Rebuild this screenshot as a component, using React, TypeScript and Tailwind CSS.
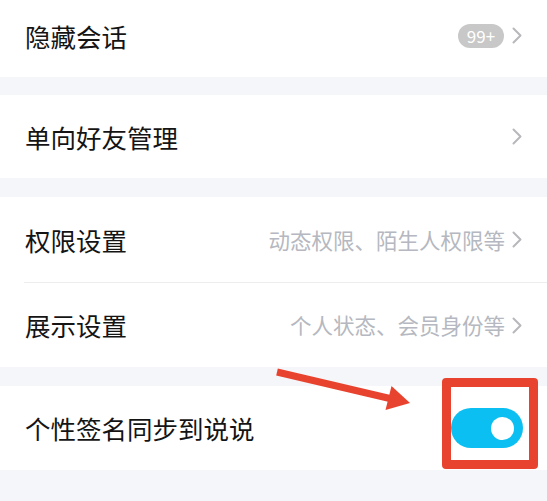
import React from "react";

const FONT = { fontFamily: '"Noto Sans CJK SC", "Noto Sans", sans-serif' };

const Chevron = () => (
  <svg width="10" height="17" viewBox="0 0 10 17" className="shrink-0">
    <polyline points="1.5,1.5 8.5,8.5 1.5,15.5" fill="none" stroke="#b8b8bc" strokeWidth="2" strokeLinecap="round" strokeLinejoin="round" />
  </svg>
);

const Gap = ({ h }: { h: string }) => <div className={`bg-[#f5f6f9] ${h}`} />;

const Row = ({
  label,
  right,
  h,
}: {
  label: string;
  right?: React.ReactNode;
  h: string;
}) => (
  <div className={`flex items-center justify-between bg-white pl-[25px] pr-[25px] ${h}`}>
    <span className="text-[25.5px] leading-none text-[#141414]">{label}</span>
    {right}
  </div>
);

const Hint = ({ text }: { text: string }) => (
  <div className="flex items-center gap-[7px]">
    <span className="text-[21.5px] leading-none text-[#b5b8c0]">{text}</span>
    <Chevron />
  </div>
);

export default function App() {
  return (
    <div className="relative h-[501px] w-[547px] overflow-hidden bg-[#f5f6f9]" style={FONT}>
      <Row
        h="h-[77px] pb-[6px]"
        label="隐藏会话"
        right={
          <div className="flex items-center gap-[8px]">
            <span className="flex h-[24px] w-[46px] items-center justify-center rounded-full bg-[#c8c8c8] text-[17px] leading-none text-white">
              99+
            </span>
            <Chevron />
          </div>
        }
      />
      <Gap h="h-[18px]" />
      <Row h="h-[83px]" label="单向好友管理" right={<Chevron />} />
      <Gap h="h-[19px]" />
      <Row h="h-[85px]" label="权限设置" right={<Hint text="动态权限、陌生人权限等" />} />
      <div className="bg-white pl-[24px]">
        <div className="h-px bg-[#ededf0]" />
      </div>
      <Row h="h-[84px]" label="展示设置" right={<Hint text="个人状态、会员身份等" />} />
      <Gap h="h-[19px]" />
      <div className="flex h-[84px] items-center justify-between bg-white pl-[25px] pr-[24px]">
        <span className="text-[25.5px] leading-none text-[#141414]">个性签名同步到说说</span>
        <div className="flex h-[40px] w-[72px] items-center justify-end rounded-full bg-[#0cbff2] pr-[9px]">
          <div className="h-[23px] w-[23px] rounded-full bg-white" />
        </div>
      </div>

      {/* annotation overlay */}
      <div className="pointer-events-none absolute left-[442px] top-[378px] h-[91px] w-[96px] rounded-[4px] border-[9px] border-[#e8432f]" />
      <svg className="pointer-events-none absolute left-0 top-0" width="547" height="501">
        <line x1="277" y1="372" x2="392" y2="399" stroke="#e8432f" strokeWidth="7" />
        <polygon points="410,403 391.5,386 385.5,410" fill="#e8432f" />
      </svg>
    </div>
  );
}
